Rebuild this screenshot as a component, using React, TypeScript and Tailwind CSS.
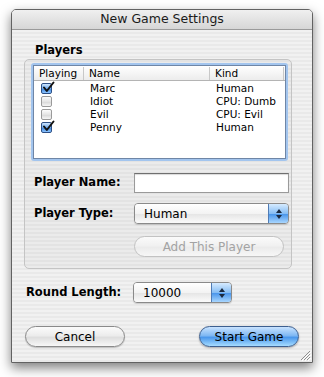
const stripes =
  "bg-[repeating-linear-gradient(180deg,#f1f1f1_0px,#f1f1f1_2px,#e9e9e9_2px,#e9e9e9_4px)]";

const players = [
  { name: "Marc", kind: "Human", playing: true },
  { name: "Idiot", kind: "CPU: Dumb", playing: false },
  { name: "Evil", kind: "CPU: Evil", playing: false },
  { name: "Penny", kind: "Human", playing: true },
];

function Checkbox({ checked }: { checked: boolean }) {
  if (checked) {
    return (
      <div className="relative w-[11px] h-[11px] rounded-[2px] border border-[#2c4f86] bg-[linear-gradient(180deg,#cfe6ff,#6fa9ea_50%,#3f86dd_55%,#8cc4ff)]">
        <svg className="absolute -top-[3px] left-0" width="13" height="13" viewBox="0 0 13 13">
          <path d="M2 6.5 L4.8 10 L11.5 1.5" fill="none" stroke="#111" strokeWidth="2" strokeLinecap="round" strokeLinejoin="round" />
        </svg>
      </div>
    );
  }
  return (
    <div className="w-[11px] h-[11px] rounded-[2px] border border-[#9a9a9a] bg-[linear-gradient(180deg,#fdfdfd,#e4e4e4_50%,#d8d8d8_55%,#f6f6f6)]" />
  );
}

function PopUp({ label, width }: { label: string; width: string }) {
  return (
    <div className={`${width} h-[21px] flex rounded-[4px] border border-[#8a8a8a] overflow-hidden shadow-[0_1px_1px_rgba(0,0,0,0.15)]`}>
      <div className="flex-1 flex items-center pl-[9px] text-[12px] text-black bg-[linear-gradient(180deg,#ffffff,#f3f3f3_50%,#e6e6e6_55%,#fbfbfb)]">
        {label}
      </div>
      <div className="w-[20px] flex flex-col items-center justify-center gap-[2px] border-l border-[#4f7bb5] bg-[linear-gradient(180deg,#d6ebff,#86bdf4_50%,#4c97eb_55%,#a8d6ff)]">
        <svg width="6" height="4" viewBox="0 0 6 4">
          <path d="M0 4 L3 0 L6 4 Z" fill="#1b2a40" />
        </svg>
        <svg width="6" height="4" viewBox="0 0 6 4">
          <path d="M0 0 L3 4 L6 0 Z" fill="#1b2a40" />
        </svg>
      </div>
    </div>
  );
}

function PillButton({
  label,
  width,
  variant,
}: {
  label: string;
  width: string;
  variant: "normal" | "default" | "disabled";
}) {
  const styles = {
    normal:
      "border-[#8a8a8a] text-black bg-[linear-gradient(180deg,#fbfbfb,#ececec_45%,#dedede_55%,#f7f7f7)] shadow-[0_1px_1px_rgba(0,0,0,0.2)]",
    default:
      "border-[#3d5f8f] text-black bg-[linear-gradient(180deg,#c9e3ff,#7fb8f3_45%,#4b98ec_55%,#a6dcff)] shadow-[0_1px_2px_rgba(0,0,0,0.3)]",
    disabled:
      "border-[#c2c2c2] text-[#a3a3a3] bg-[linear-gradient(180deg,#fafafa,#f1f1f1_45%,#ebebeb_55%,#f7f7f7)]",
  }[variant];
  return (
    <div className={`${width} h-[21px] rounded-full border flex items-center justify-center text-[12px] ${styles}`}>
      {label}
    </div>
  );
}

export default function App() {
  return (
    <div className="w-[324px] h-[377px] bg-white pt-[9px] pl-[11px] font-['DejaVu_Sans',sans-serif]">
      <div className={`relative w-[302px] h-[354px] flex flex-col rounded-t-[5px] border border-[#626262] overflow-hidden shadow-[0_5px_12px_rgba(0,0,0,0.5)] ${stripes}`}>
        {/* Title bar */}
        <div className="h-[20px] shrink-0 flex items-center justify-center border-b border-[#9a9a9a] bg-[linear-gradient(180deg,#f0f0f0,#d6d6d6)] text-[12.5px] text-[#1b1b1b]">
          New Game Settings
        </div>

        {/* Players group */}
        <div className="mt-[13px] ml-[23px] h-[14px] leading-[14px] text-[11.5px] font-bold text-black">Players</div>
        <div className="mt-[2px] ml-[12px] w-[268px] h-[210px] rounded-[5px] border border-[#c4c4c4] bg-[rgba(0,0,0,0.025)] pt-[3px] pl-[6px]">
          {/* Table */}
          <div className="w-[257px] h-[98px] rounded-[3px] p-[2px] bg-[#a3c5ee]">
            <div className="w-full h-full border border-[#6f86a6] bg-white overflow-hidden text-[10.5px] text-black">
              <div className="h-[15px] flex items-center border-b border-[#b4b4b4] bg-[linear-gradient(180deg,#ffffff,#ececec)]">
                <div className="w-[50px] pl-[5px] border-r border-[#c8c8c8] leading-[13px]">Playing</div>
                <div className="w-[126px] pl-[5px] border-r border-[#c8c8c8] leading-[13px]">Name</div>
                <div className="w-[74px] pl-[5px] border-r border-[#c8c8c8] leading-[13px]">Kind</div>
                <div className="flex-1" />
              </div>
              <div className="pt-[1px]">
                {players.map((p) => (
                  <div key={p.name} className="h-[13px] flex items-center">
                    <div className="w-[51px] pl-[7px] flex items-center">
                      <Checkbox checked={p.playing} />
                    </div>
                    <div className="w-[126px] pl-[5px] leading-[13px]">{p.name}</div>
                    <div className="w-[74px] pl-[5px] leading-[13px]">{p.kind}</div>
                  </div>
                ))}
              </div>
            </div>
          </div>

          {/* Player name */}
          <div className="mt-[12px] ml-[3px] flex items-center">
            <div className="w-[100px] text-[11.5px] font-bold text-black">Player Name:</div>
            <div className="w-[155px] h-[20px] bg-white border border-[#9a9a9a] border-t-[#6f6f6f] shadow-[inset_0_1px_1px_rgba(0,0,0,0.15)]" />
          </div>

          {/* Player type */}
          <div className="mt-[10px] ml-[3px] flex items-center">
            <div className="w-[100px] text-[11.5px] font-bold text-black">Player Type:</div>
            <PopUp label="Human" width="w-[155px]" />
          </div>

          <div className="mt-[12px] ml-[103px]">
            <PillButton label="Add This Player" width="w-[150px]" variant="disabled" />
          </div>
        </div>

        {/* Round length */}
        <div className="mt-[13px] ml-[14px] flex items-center">
          <div className="w-[107px] text-[11.5px] font-bold text-black">Round Length:</div>
          <PopUp label="10000" width="w-[99px]" />
        </div>

        {/* Buttons */}
        <div className="mt-[23px] ml-[13px] flex gap-[74px]">
          <PillButton label="Cancel" width="w-[100px]" variant="normal" />
          <PillButton label="Start Game" width="w-[100px]" variant="default" />
        </div>

        {/* Resize grip */}
        <svg className="absolute right-[1px] bottom-[1px]" width="12" height="12" viewBox="0 0 12 12">
          <path d="M11 2 L2 11 M11 5 L5 11 M11 8 L8 11" stroke="#8f8f8f" strokeWidth="1" />
          <path d="M12 3 L3 12 M12 6 L6 12 M12 9 L9 12" stroke="#ffffff" strokeWidth="1" />
        </svg>
      </div>
    </div>
  );
}
